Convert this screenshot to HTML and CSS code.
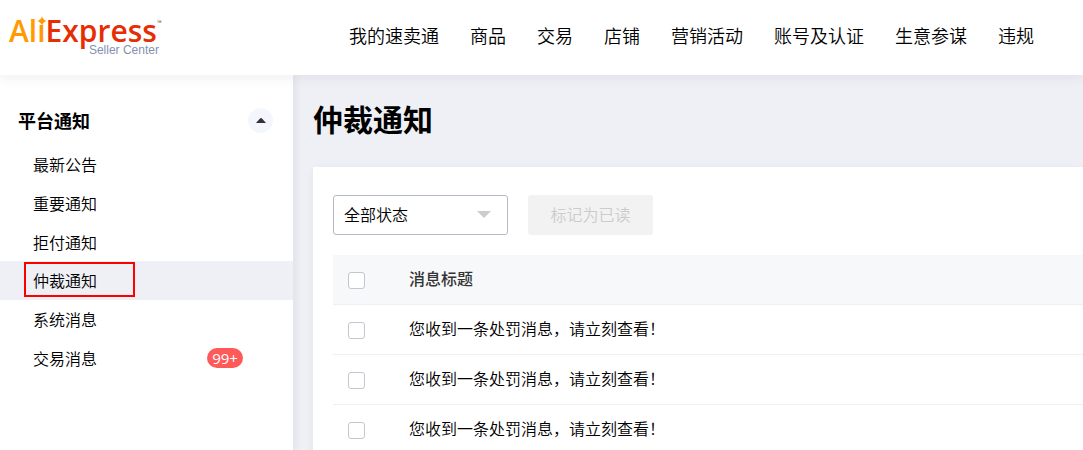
FILE: index.html
```html
<!DOCTYPE html>
<html lang="zh-CN">
<head>
    <meta charset="UTF-8">
    <meta name="viewport" content="width=device-width, initial-scale=1.0">
    <title>仲裁通知 - AliExpress Seller Center</title>
    <link rel="stylesheet" href="styles.css">
</head>
<body>
    <!-- 顶部导航 -->
    <header class="header">
        <a class="logo" href="#">
            <span class="logo-name"><span class="logo-ali">Al<span class="logo-i">i<svg class="logo-star" viewBox="0 0 10 10"><path d="M5 0 Q5.8 4.2 10 5 Q5.8 5.8 5 10 Q4.2 5.8 0 5 Q4.2 4.2 5 0Z" fill="#ff9a00"/></svg></span></span>Express</span>
            <span class="logo-tm">™</span>
            <span class="logo-sub">Seller Center</span>
        </a>
        <nav class="nav">
            <a href="#">我的速卖通</a>
            <a href="#">商品</a>
            <a href="#">交易</a>
            <a href="#">店铺</a>
            <a href="#">营销活动</a>
            <a href="#">账号及认证</a>
            <a href="#">生意参谋</a>
            <a href="#">违规</a>
        </nav>
    </header>

    <div class="layout">
        <!-- 左侧菜单 -->
        <aside class="sidebar">
            <div class="sidebar-head">
                <h2>平台通知</h2>
                <button class="toggle" type="button" aria-label="收起">
                    <svg width="10" height="5" viewBox="0 0 10 5"><path d="M0 5 L4 .6 Q5 -.4 6 .6 L10 5Z" fill="#333"/></svg>
                </button>
            </div>
            <ul class="menu">
                <li><a href="#">最新公告</a></li>
                <li><a href="#">重要通知</a></li>
                <li><a href="#">拒付通知</a></li>
                <li class="active"><a href="#">仲裁通知</a></li>
                <li><a href="#">系统消息</a></li>
                <li><a href="#">交易消息<span class="badge">99+</span></a></li>
            </ul>
        </aside>

        <!-- 消息列表 -->
        <main class="main">
            <h1>仲裁通知</h1>
            <section class="card">
                <div class="toolbar">
                    <div class="select-wrap">
                        <select aria-label="状态">
                            <option>全部状态</option>
                        </select>
                        <svg class="select-arrow" width="14" height="7" viewBox="0 0 14 7"><path d="M0 0 H14 L7 7Z" fill="#ccc"/></svg>
                    </div>
                    <button class="mark-read" type="button" disabled>标记为已读</button>
                </div>
                <table class="messages">
                    <thead>
                        <tr>
                            <th class="check"><input type="checkbox" aria-label="全选"></th>
                            <th>消息标题</th>
                        </tr>
                    </thead>
                    <tbody>
                        <tr>
                            <td class="check"><input type="checkbox" id="msg1"></td>
                            <td><label for="msg1">您收到一条处罚消息，请立刻查看！</label></td>
                        </tr>
                        <tr>
                            <td class="check"><input type="checkbox" id="msg2"></td>
                            <td><label for="msg2">您收到一条处罚消息，请立刻查看！</label></td>
                        </tr>
                        <tr>
                            <td class="check"><input type="checkbox" id="msg3"></td>
                            <td><label for="msg3">您收到一条处罚消息，请立刻查看！</label></td>
                        </tr>
                    </tbody>
                </table>
            </section>
        </main>
    </div>
</body>
</html>
```

FILE: styles.css
```css
*, *::after {
    box-sizing: border-box;
}

body {
    display: flex;
    flex-direction: column;
    height: 100vh;
    margin: 0;
    overflow: hidden;
    background-color: #eff0f5;
    color: #000;
    font-family: "Noto Sans CJK SC", sans-serif;
    font-size: 16px;
    font-weight: 350;
}

a {
    color: inherit;
    text-decoration: none;
}

button, select {
    font: inherit;
}

/* header */
.header {
    position: relative;
    z-index: 2;
    display: flex;
    flex: none;
    align-items: center;
    height: 75px;
    padding: 0 0 6px 9px;
    background-color: #fff;
    box-shadow: 0 2px 12px rgba(31, 31, 87, 0.08);
}

.logo {
    display: grid;
    grid-template-columns: auto 1fr;
    width: 340px;
    flex: none;
    padding-top: 2px;
    font-weight: 400;
}

.logo-name {
    color: #e62e04;
    font-family: "Open Sans", sans-serif;
    font-size: 30px;
    font-weight: 600;
    line-height: 32px;
}

.logo-ali {
    color: #ff9a00;
}

.logo-i {
    position: relative;
}

.logo-star {
    position: absolute;
    top: 6px;
    left: 0;
    width: 10px;
    height: 10px;
}

.logo-tm {
    color: #333;
    font-size: 6px;
    line-height: 16px;
}

.logo-sub {
    grid-column: 1;
    margin: -3px -2px 0 0;
    color: #8292ae;
    font-family: "Liberation Sans", sans-serif;
    font-size: 12px;
    line-height: 12px;
    text-align: right;
}

.nav {
    display: flex;
    gap: 31px;
    font-size: 18px;
    line-height: 26px;
    white-space: nowrap;
}

/* sidebar */
.layout {
    display: flex;
    flex: 1;
    min-height: 0;
}

.sidebar {
    flex: none;
    width: 293px;
    padding-top: 32px;
    background-color: #fff;
    box-shadow: 2px 0 8px rgba(31, 31, 87, 0.08);
}

.sidebar-head {
    display: flex;
    align-items: center;
    justify-content: space-between;
    padding: 0 20px 0 18px;
}

.sidebar-head h2 {
    margin: 0;
    font-size: 18px;
    font-weight: 700;
    line-height: 26px;
}

.toggle {
    display: flex;
    align-items: center;
    justify-content: center;
    width: 25px;
    height: 25px;
    padding: 0;
    border: none;
    border-radius: 50%;
    background-color: #f3f7fd;
}

.menu {
    display: grid;
    grid-template-rows: repeat(6, 1fr);
    height: 232px;
    margin: 12px 0 0;
    padding: 0;
    list-style: none;
}

.menu a {
    position: relative;
    display: flex;
    align-items: center;
    justify-content: space-between;
    height: 100%;
    padding: 0 50px 0 33px;
}

.menu .active {
    background-color: #eff0f5;
}

.menu .active a::after {
    content: "";
    position: absolute;
    top: 1px;
    left: 24px;
    width: 111px;
    height: 35px;
    border: 2px solid #f00;
}

.badge {
    width: 36px;
    height: 20px;
    border-radius: 10px;
    background-color: #ff5a5a;
    color: #fff;
    font-family: "Open Sans", sans-serif;
    font-size: 15px;
    font-weight: 500;
    line-height: 20px;
    text-align: center;
}

/* main */
.main {
    flex: 1;
    min-width: 0;
    padding: 22px 0 0 20px;
    overflow: hidden;
}

.main h1 {
    margin: 0;
    font-size: 30px;
    font-weight: 700;
    line-height: 42px;
}

.card {
    margin-top: 28px;
    padding: 28px 0 20px 20px;
    background-color: #fff;
    box-shadow: 0 2px 8px rgba(31, 31, 87, 0.06);
}

.toolbar {
    display: flex;
    gap: 20px;
}

.select-wrap {
    position: relative;
    width: 175px;
}

.select-wrap select {
    width: 100%;
    height: 40px;
    padding: 0 30px 3px 10px;
    border: 1px solid #b4bac6;
    border-radius: 3px;
    background-color: #fff;
    color: #000;
    appearance: none;
}

.select-arrow {
    position: absolute;
    top: 16px;
    right: 17px;
    pointer-events: none;
}

.mark-read {
    width: 125px;
    height: 40px;
    padding: 0 0 3px;
    border: none;
    border-radius: 3px;
    background-color: #f2f2f2;
    color: #ccc;
}

.messages {
    width: 100%;
    margin-top: 20px;
    border-collapse: separate;
    border-spacing: 0;
    text-align: left;
}

.messages th, .messages td {
    height: 50px;
    padding: 0 0 3px;
    border-bottom: 1px solid #eff0f2;
    line-height: 24px;
}

.messages th {
    background-color: #f7f8fa;
    color: #333;
    font-weight: 500;
}

.messages .check {
    width: 76px;
    padding: 0 0 0 15px;
}

.messages input {
    display: block;
    width: 17px;
    height: 17px;
    margin: 2px 0 0;
    border: 1px solid #c4c6cf;
    border-radius: 3px;
    background-color: #fff;
    appearance: none;
}
```
